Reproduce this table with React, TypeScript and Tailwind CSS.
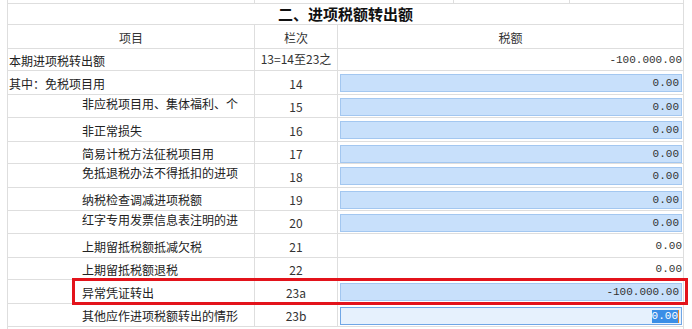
import React from "react";

type Row = {
  label: string;
  indent: boolean;
  labelTop?: boolean;
  no: string;
  noTop?: boolean;
  value: string;
  kind: "plain" | "input" | "focus";
  h: string;
};

const rows: Row[] = [
  { label: "本期进项税转出额", indent: false, no: "13=14至23之和", noTop: true, value: "-100.000.00", kind: "plain", h: "h-[22px]" },
  { label: "其中：免税项目用", indent: false, no: "14", value: "0.00", kind: "input", h: "h-[24px]" },
  { label: "非应税项目用、集体福利、个人消费", indent: true, labelTop: true, no: "15", value: "0.00", kind: "input", h: "h-[23px]" },
  { label: "非正常损失", indent: true, no: "16", value: "0.00", kind: "input", h: "h-[24px]" },
  { label: "简易计税方法征税项目用", indent: true, no: "17", value: "0.00", kind: "input", h: "h-[22px]" },
  { label: "免抵退税办法不得抵扣的进项税额", indent: true, labelTop: true, no: "18", value: "0.00", kind: "input", h: "h-[24px]" },
  { label: "纳税检查调减进项税额", indent: true, no: "19", value: "0.00", kind: "input", h: "h-[23px]" },
  { label: "红字专用发票信息表注明的进项税额", indent: true, labelTop: true, no: "20", value: "0.00", kind: "input", h: "h-[23px]" },
  { label: "上期留抵税额抵减欠税", indent: true, no: "21", value: "0.00", kind: "plain", h: "h-[24px]" },
  { label: "上期留抵税额退税", indent: true, no: "22", value: "0.00", kind: "plain", h: "h-[22px]" },
  { label: "异常凭证转出", indent: true, no: "23a", value: "-100.000.00", kind: "input", h: "h-[24px]" },
  { label: "其他应作进项税额转出的情形", indent: true, no: "23b", value: "0.00", kind: "focus", h: "h-[23px]" },
];

const mono = "font-['Liberation_Mono',monospace] text-[11px] text-[#333]";

function ValueCell({ row }: { row: Row }) {
  if (row.kind === "plain") {
    return (
      <div className={`flex-1 flex items-center justify-end pr-[1px] pt-[2px] ${mono}`}>
        {row.value}
      </div>
    );
  }
  if (row.kind === "focus") {
    return (
      <div className="flex-1 pt-[3px] pl-[2px] pr-[1px]">
        <div className="h-[18px] box-border border border-[#6fa6e6] bg-[#e6f1fd] flex items-center justify-end pr-[2px]">
          <span className={`${mono} bg-[#3a8ee6] text-white leading-[13px] border-r border-[#e0862a]`}>{row.value}</span>
        </div>
      </div>
    );
  }
  return (
    <div className="flex-1 pt-[3px] pl-[2px] pr-[1px]">
      <div className={`h-[18px] box-border border border-[#a3c7f0] bg-[#c8e0fb] flex items-center justify-end pr-[2px] ${mono}`}>
        {row.value}
      </div>
    </div>
  );
}

export default function App() {
  return (
    <div className="relative w-[692px] h-[329px] overflow-hidden bg-white font-['Noto_Sans_CJK_SC',sans-serif] text-[12px] text-[#333]">
      <div className="ml-[7px] w-[677px]">
        {/* partial previous row */}
        <div className="flex h-[4px] box-border border-l border-r border-b border-[#dedede]">
          <div className="w-[247px] border-r border-[#dedede]" />
          <div className="w-[199px] border-r border-[#dedede]" />
          <div className="w-[116px] border-r border-[#dedede]" />
          <div className="flex-1" />
        </div>
        {/* title */}
        <div className="flex h-[21px] box-border border-l border-r border-b border-[#dedede] items-center justify-center">
          <span className="text-[15px] font-bold text-[#111] leading-[20px]">二、进项税额转出额</span>
        </div>
        {/* header */}
        <div className="flex h-[24px] box-border border-l border-r border-b border-[#dedede] text-[#333]">
          <div className="w-[247px] border-r border-[#dedede] flex items-center justify-center pt-[3px]">项目</div>
          <div className="w-[83px] border-r border-[#dedede] flex items-center justify-center pt-[3px]">栏次</div>
          <div className="flex-1 flex items-center justify-center pt-[3px]">税额</div>
        </div>
        {rows.map((r) => (
          <div key={r.no} className={`flex ${r.h} box-border border-l border-r border-b border-[#dedede]`}>
            <div className={`w-[247px] border-r border-[#dedede] overflow-hidden flex ${r.labelTop ? "items-start pt-[1px]" : "items-center pt-[1px]"} ${r.indent ? "pl-[74px]" : "pl-[1px]"}`}>
              <div className={`w-[162px] leading-[15px] text-[#222] ${r.labelTop ? "h-[16px] overflow-hidden" : ""}`}>{r.label}</div>
            </div>
            <div className={`w-[83px] border-r border-[#dedede] overflow-hidden flex justify-center px-[4px] text-center ${r.noTop ? "items-start pt-[3px]" : "items-center pt-[2px]"}`}>
              <div className={`leading-[14px] ${r.noTop ? "h-[15px] overflow-hidden" : ""}`}>{r.no}</div>
            </div>
            <ValueCell row={r} />
          </div>
        ))}
        <div className="h-[10px] border-l border-r border-[#dedede]" />
      </div>
      <div className="absolute left-[72px] top-[278px] w-[616px] h-[27px] border-[3px] border-[#e3131b]" />
    </div>
  );
}
